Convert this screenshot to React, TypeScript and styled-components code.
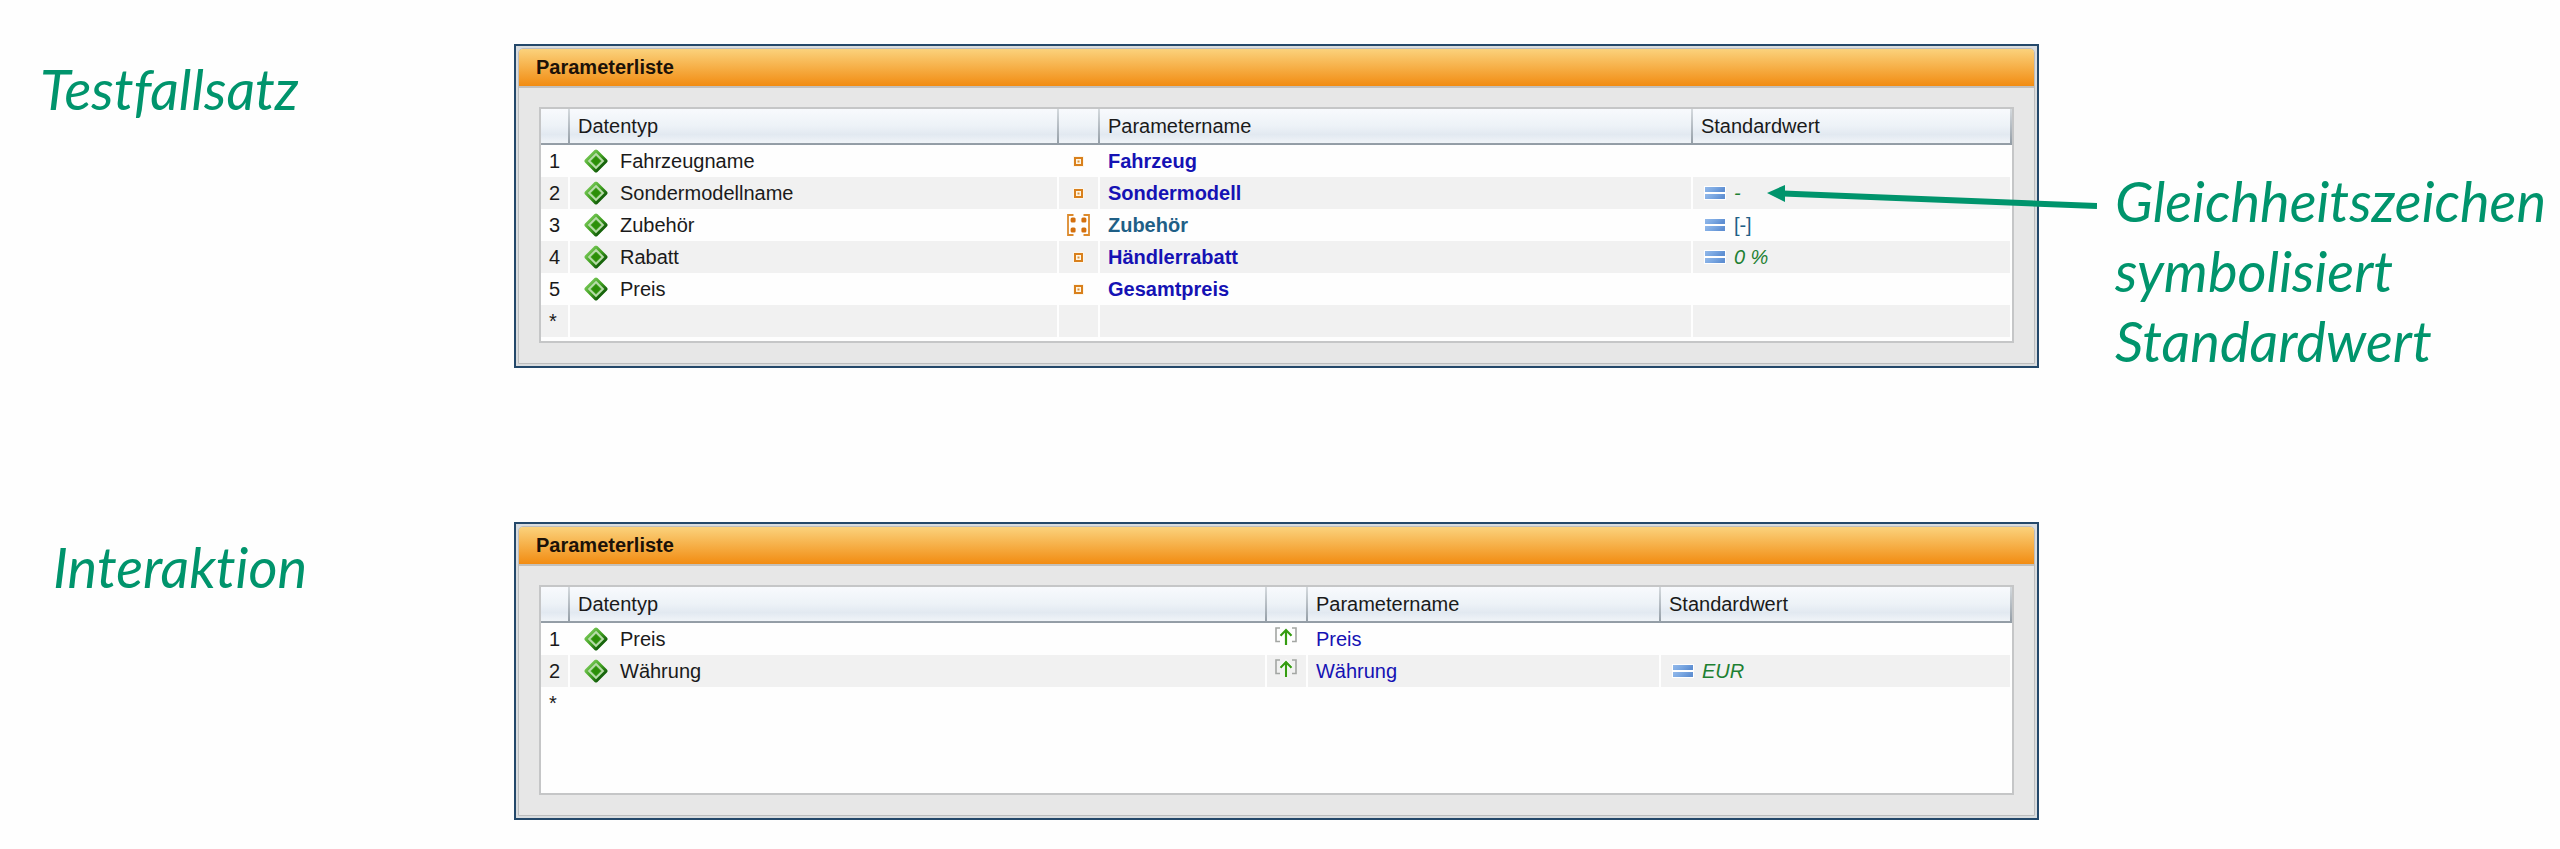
import React from "react";
import styled, { createGlobalStyle, css } from "styled-components";

const ACCENT = "#00946c";

const GlobalStyle = createGlobalStyle`
  * { box-sizing: border-box; }
  body {
    margin: 0;
    background: #fefefe;
    color: #1a1a1a;
    font-family: "Liberation Sans", Arial, sans-serif;
    font-size: 20px;
  }
`;

const Page = styled.main`
  display: flex;
  flex-direction: column;
  gap: 146px;
  padding: 44px 0 28px;
`;

const Example = styled.section`
  display: grid;
  grid-template-columns: minmax(0, 514fr) minmax(0, 1525fr) minmax(0, 521fr);
  align-items: start;
`;

const noteText = css`
  margin: 0;
  color: ${ACCENT};
  font-family: Lato, "Open Sans", sans-serif;
  font-size: 56px;
  font-style: italic;
  font-variant-ligatures: none;
  font-weight: 400;
  line-height: 70px;
`;

const Label = styled.h1<{ $indent: number }>`
  ${noteText}
  padding: 10px 0 0 ${(p) => p.$indent}px;
`;

const Callout = styled.aside`
  position: relative;
  padding: 122px 0 0 76px;
`;

const CalloutText = styled.p`
  ${noteText}
  white-space: nowrap;
`;

const Arrow = styled.svg`
  position: absolute;
  top: 140px;
  left: -272px;
`;

const Panel = styled.div`
  padding: 2px;
  border: 2px solid #24486a;
  background: #d9dcde;
`;

const PanelInner = styled.div`
  border: 1px solid #bcbdbe;
  border-radius: 5px 5px 0 0;
  background: #e7e7e7;
  overflow: hidden;
`;

const PanelTitle = styled.h2`
  margin: 0;
  padding: 0 17px;
  border-bottom: 2px solid #c3c0bb;
  background: linear-gradient(#fbd27c, #f6af47 50%, #f28c12);
  color: #1c1208;
  font-size: 20px;
  font-weight: 700;
  line-height: 37px;
`;

const PanelBody = styled.div`
  padding: 19px 20px 20px;
`;

const TableFrame = styled.div<{ $minHeight?: number }>`
  min-height: ${(p) => p.$minHeight ?? 0}px;
  padding-bottom: 4px;
  border: 2px solid #c5c6c7;
  background: #fefefe;
`;

const Table = styled.table`
  width: 100%;
  table-layout: fixed;
  border-collapse: separate;
  border-spacing: 0;
`;

const HeadCell = styled.th`
  height: 36px;
  padding: 0 8px;
  border-right: 2px solid;
  border-bottom: 2px solid #acb0b3;
  border-image: linear-gradient(#d5dade, #929ca5) 0 2 2 0;
  background: linear-gradient(#f8fafd, #edf2f7 50%, #e2e9f1 75%, #f0f4f8);
  font-weight: 400;
  line-height: 34px;
  text-align: left;
`;

const Row = styled.tr`
  &:nth-child(even) {
    background: #f1f1f1;
  }
`;

const Cell = styled.td<{ $indent?: number }>`
  height: 32px;
  padding: 0 0 0 ${(p) => p.$indent ?? 0}px;
  border-right: 2px solid #fefefe;
  line-height: 32px;
  white-space: nowrap;
`;

const IconText = styled.span<{ $gap: number }>`
  display: flex;
  align-items: center;
  gap: ${(p) => p.$gap}px;
  height: 32px;
`;

const KindBox = styled.span<{ $raised?: boolean }>`
  display: flex;
  align-items: center;
  justify-content: center;
  height: 32px;
  padding-bottom: ${(p) => (p.$raised ? 6 : 0)}px;
`;

type Tone = "name" | "list" | "value";
const toneColor: Record<Tone, string> = {
  name: "#1512b4",
  list: "#1f5f86",
  value: "#1d8032",
};

const Toned = styled.span<{ $tone: Tone; $bold?: boolean; $italic?: boolean }>`
  color: ${(p) => toneColor[p.$tone]};
  font-weight: ${(p) => (p.$bold ? 700 : 400)};
  font-style: ${(p) => (p.$italic ? "italic" : "normal")};
`;

function TypeIcon() {
  return (
    <svg width="24" height="24" viewBox="0 0 24 24" aria-hidden="true">
      <defs>
        <linearGradient id="gem" x1="0.2" y1="0.2" x2="0.8" y2="0.8">
          <stop offset="0" stopColor="#6cc04c" />
          <stop offset="0.5" stopColor="#3f9f1f" />
          <stop offset="1" stopColor="#14600a" />
        </linearGradient>
      </defs>
      <path d="M12 0 24 12 12 24 0 12Z" fill="#fff" stroke="#fff" strokeLinejoin="round" />
      <path d="M12 2.500 21.500 12 12 21.500 2.500 12Z" fill="url(#gem)" stroke="url(#gem)" strokeWidth="4" strokeLinejoin="round" />
      <path d="M12 5 19 12 12 19 5 12Z" fill="#4fa832" stroke="#b9dcab" strokeWidth="1.800" />
      <path d="M12 7.400 16.600 12 12 16.600 7.400 12Z" fill="#2c8f08" />
    </svg>
  );
}

function SingleIcon() {
  return (
    <svg width="11" height="11" viewBox="0 0 11 11" aria-hidden="true">
      <rect width="11" height="11" fill="#fdf6ea" />
      <rect x="2" y="2" width="7" height="7" fill="#fff6e4" stroke="#d9801c" strokeWidth="2" />
      <rect x="4.500" y="4.500" width="2" height="2" fill="#dc9038" />
    </svg>
  );
}

function ListIcon() {
  return (
    <svg width="23" height="22" viewBox="0 0 23 22" aria-hidden="true">
      <path d="M6.500 1H1v20h5.500M16.500 1H22v20h-5.500" fill="none" stroke="#dc8a2c" strokeWidth="1.800" />
      <g fill="#d4700e">
        <rect x="3.600" y="3.600" width="5" height="5" rx="1.500" />
        <rect x="14.400" y="3.600" width="5" height="5" rx="1.500" />
        <rect x="3.600" y="13.400" width="5" height="5" rx="1.500" />
        <rect x="14.400" y="13.400" width="5" height="5" rx="1.500" />
      </g>
    </svg>
  );
}

function OutputIcon() {
  return (
    <svg width="22" height="19" viewBox="0 0 22 19" aria-hidden="true">
      <path d="M5 1H1v13.500h4M17 1h4v13.500h-4" fill="none" stroke="#a3a6a3" strokeWidth="1.600" />
      <path d="M11 18V3.500M5.500 8.800 11 3l5.500 5.800" fill="none" stroke="#fff" strokeWidth="4" />
      <path d="M11 18V3.500M5.500 8.800 11 3l5.500 5.800" fill="none" stroke="#349c10" strokeWidth="2.200" />
    </svg>
  );
}

function EqualsIcon() {
  return (
    <svg width="22" height="14" viewBox="0 0 22 14" aria-hidden="true">
      <defs>
        <linearGradient id="bar" x1="0" y1="0" x2="1" y2="0.3">
          <stop offset="0" stopColor="#93b9ea" />
          <stop offset="0.5" stopColor="#7ba8e2" />
          <stop offset="1" stopColor="#5f8fd2" />
        </linearGradient>
      </defs>
      <rect width="22" height="14" fill="#fff" />
      <rect x="1" y="1" width="20" height="5" fill="url(#bar)" />
      <rect x="1" y="8" width="20" height="5" fill="url(#bar)" />
    </svg>
  );
}

type Kind = "single" | "list" | "output";

interface Parameter {
  type: string;
  kind: Kind;
  name: string;
  value?: string;
}

const kindIcons: Record<Kind, React.ReactNode> = {
  single: <SingleIcon />,
  list: <ListIcon />,
  output: <OutputIcon />,
};

interface ParameterPanelProps {
  parameters: Parameter[];
  typeWidth: string;
  nameWidth: string;
  minHeight?: number;
}

function ParameterPanel({ parameters, typeWidth, nameWidth, minHeight }: ParameterPanelProps) {
  return (
    <Panel>
      <PanelInner>
        <PanelTitle>Parameterliste</PanelTitle>
        <PanelBody>
          <TableFrame $minHeight={minHeight}>
            <Table>
              <colgroup>
                <col width="29" />
                <col width={typeWidth} />
                <col width="41" />
                <col width={nameWidth} />
                <col />
              </colgroup>
              <thead>
                <tr>
                  <HeadCell />
                  <HeadCell scope="col">Datentyp</HeadCell>
                  <HeadCell />
                  <HeadCell scope="col">Parametername</HeadCell>
                  <HeadCell scope="col">Standardwert</HeadCell>
                </tr>
              </thead>
              <tbody>
                {parameters.map((p, i) => {
                  const isList = p.kind === "list";
                  return (
                    <Row key={p.name}>
                      <Cell $indent={8}>{i + 1}</Cell>
                      <Cell $indent={14}>
                        <IconText $gap={12}>
                          <TypeIcon />
                          {p.type}
                        </IconText>
                      </Cell>
                      <Cell>
                        <KindBox $raised={p.kind === "output"}>{kindIcons[p.kind]}</KindBox>
                      </Cell>
                      <Cell $indent={8}>
                        <Toned $tone={isList ? "list" : "name"} $bold={p.kind !== "output"}>
                          {p.name}
                        </Toned>
                      </Cell>
                      <Cell $indent={11}>
                        {p.value && (
                          <IconText $gap={8}>
                            <EqualsIcon />
                            <Toned $tone={isList ? "list" : "value"} $italic={!isList}>
                              {p.value}
                            </Toned>
                          </IconText>
                        )}
                      </Cell>
                    </Row>
                  );
                })}
                <Row>
                  <Cell $indent={8}>*</Cell>
                  <Cell />
                  <Cell />
                  <Cell />
                  <Cell />
                </Row>
              </tbody>
            </Table>
          </TableFrame>
        </PanelBody>
      </PanelInner>
    </Panel>
  );
}

const testCaseParameters: Parameter[] = [
  { type: "Fahrzeugname", kind: "single", name: "Fahrzeug" },
  { type: "Sondermodellname", kind: "single", name: "Sondermodell", value: "-" },
  { type: "Zubehör", kind: "list", name: "Zubehör", value: "[-]" },
  { type: "Rabatt", kind: "single", name: "Händlerrabatt", value: "0 %" },
  { type: "Preis", kind: "single", name: "Gesamtpreis" },
];

const interactionParameters: Parameter[] = [
  { type: "Preis", kind: "output", name: "Preis" },
  { type: "Währung", kind: "output", name: "Währung", value: "EUR" },
];

export default function App() {
  return (
    <>
      <GlobalStyle />
      <Page>
        <Example>
          <Label $indent={40}>Testfallsatz</Label>
          <ParameterPanel parameters={testCaseParameters} typeWidth="33.24%" nameWidth="40.31%" />
          <Callout>
            <CalloutText>
              Gleichheitszeichen
              <br />
              symbolisiert
              <br />
              Standardwert
            </CalloutText>
            <Arrow width="330" height="26" viewBox="0 0 330 26" aria-hidden="true">
              <path d="M16 9.500 330 22" stroke={ACCENT} strokeWidth="6" />
              <path d="M0 9 18 1v17Z" fill={ACCENT} />
            </Arrow>
          </Callout>
        </Example>
        <Example>
          <Label $indent={53}>Interaktion</Label>
          <ParameterPanel
            parameters={interactionParameters}
            typeWidth="47.38%"
            nameWidth="24%"
            minHeight={210}
          />
        </Example>
      </Page>
    </>
  );
}
